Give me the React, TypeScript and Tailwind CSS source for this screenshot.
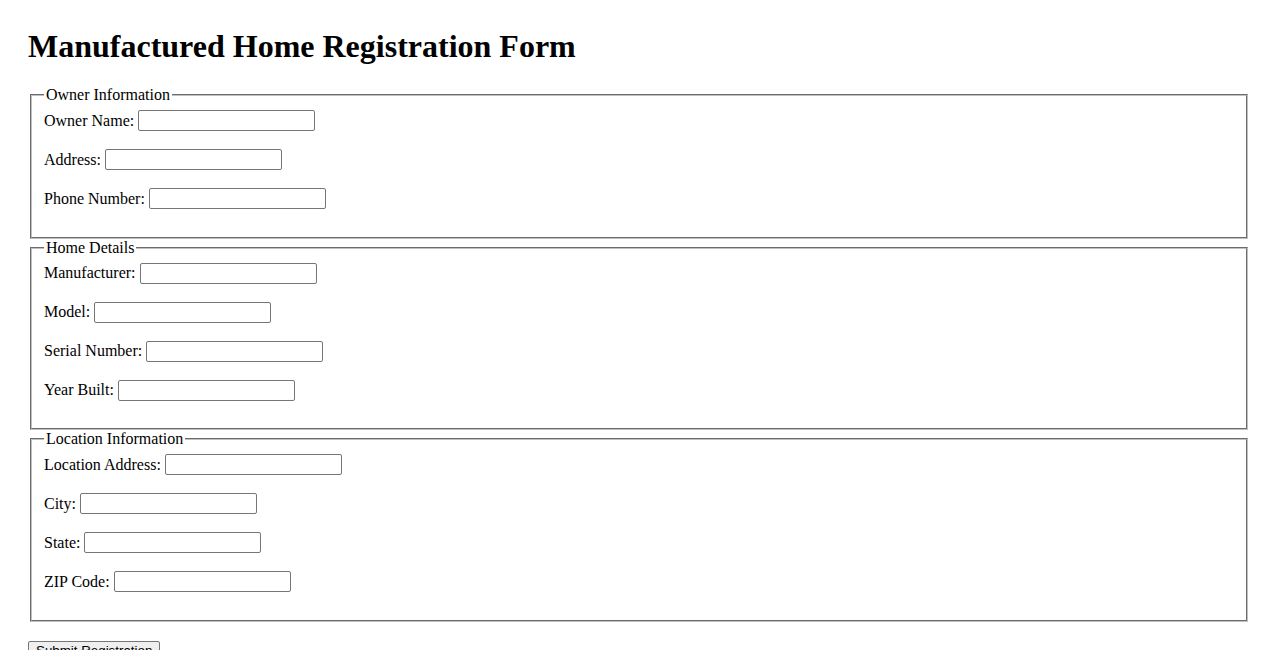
const sections = [
  {
    legend: 'Owner Information',
    fields: ['Owner Name:', 'Address:', 'Phone Number:'],
  },
  {
    legend: 'Home Details',
    fields: ['Manufacturer:', 'Model:', 'Serial Number:', 'Year Built:'],
  },
  {
    legend: 'Location Information',
    fields: ['Location Address:', 'City:', 'State:', 'ZIP Code:'],
  },
];

const Field = ({ label }: { label: string }) => (
  <div className="flex items-center gap-[4px] h-[21px]">
    <label className="leading-[18px]">{label}</label>
    <input
      type="text"
      className="w-[177px] h-[21px] border border-[#767676] rounded-[2px] bg-white px-[2px] text-[13px]"
    />
  </div>
);

export default function App() {
  return (
    <div className="min-h-screen bg-white text-black px-[28px] pt-[28px] pb-[20px] font-['Liberation_Serif','Times_New_Roman',serif] text-[16px]">
      <h1 className="text-[32px] font-bold leading-[37px] mb-[21px]">
        Manufactured Home Registration Form
      </h1>
      <form>
        {sections.map((s) => (
          <fieldset
            key={s.legend}
            className="mx-[2px] border-2 [border-style:groove] border-[#c0c0c0] px-[12px] pt-[6px] pb-[27.5px]"
          >
            <legend className="px-[2px] leading-[18px]">{s.legend}</legend>
            <div className="flex flex-col gap-[18px]">
              {s.fields.map((f) => (
                <Field key={f} label={f} />
              ))}
            </div>
          </fieldset>
        ))}
        <button
          type="submit"
          className="mt-[19px] px-[7px] py-[1px] border border-[#767676] rounded-[2px] bg-[#efefef] font-['Liberation_Sans',Arial,sans-serif] text-[13.33px] leading-[15px]"
        >
          Submit Registration
        </button>
      </form>
    </div>
  );
}
